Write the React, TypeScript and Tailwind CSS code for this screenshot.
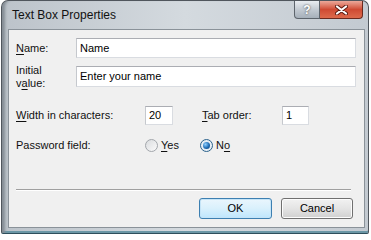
const font = "font-['Liberation_Sans','Noto_Sans',sans-serif]";

const Field = ({ value, className }: { value: string; className: string }) => (
  <div
    className={`flex items-center border border-[#abadb3] border-l-[#c5c8cd] border-b-[#d9dce1] border-r-[#d9dce1] bg-white pl-[3px] text-[11px] text-black ${className}`}
  >
    {value}
  </div>
);

const Radio = ({ checked }: { checked?: boolean }) => (
  <span
    className={`flex h-[13px] w-[13px] items-center justify-center rounded-full border ${
      checked ? "border-[#2c628b] bg-[#e6eef5]" : "border-[#a2a6ab] bg-gradient-to-br from-[#d9dbde] to-[#fbfbfb]"
    }`}
  >
    {checked && (
      <span className="h-[7px] w-[7px] rounded-full bg-[radial-gradient(circle_at_35%_35%,#8fd0ff,#1f6db5_55%,#0b3a6b)]" />
    )}
  </span>
);

export default function App() {
  return (
    <div className={`h-[237px] w-[371px] bg-white ${font}`}>
      <div className="ml-px flex h-[234px] w-[368px] flex-col rounded-t-[7px] rounded-b-[2px] border border-[#50565d] border-b-[#2e4f5c] bg-gradient-to-r from-[#bcc3ca] via-[#d4dadf] to-[#c3cad1] shadow-[inset_5px_0_3px_-2px_#858d95,inset_0_-2px_0_#6a97a6]">
        {/* Title bar */}
        <div className="flex h-[28px] justify-between">
          <span className="pl-[10px] pt-[6px] text-[12px] leading-[16px] text-[#111]">Text Box Properties</span>
          <div className="mr-[5px] flex h-[18px]">
            <div className="flex w-[26px] items-center justify-center rounded-bl-[4px] border border-t-0 border-[#5d646c] bg-gradient-to-b from-[#e9edf1] via-[#c3cad2] to-[#a6b0ba] text-[12px] font-bold leading-none text-white [text-shadow:0_0_2px_#333]">
              ?
            </div>
            <div className="flex w-[43px] items-center justify-center rounded-br-[4px] border border-l-0 border-t-0 border-[#6b2a1f] bg-gradient-to-b from-[#eba89a] via-[#cf4a33] to-[#dd6a4c]">
              <svg width="13" height="10" viewBox="0 0 13 10">
                <path d="M2 1.5 L11 8.5 M11 1.5 L2 8.5" stroke="#5a1a10" strokeWidth="4" strokeLinecap="round" />
                <path d="M2 1.5 L11 8.5 M11 1.5 L2 8.5" stroke="#fff" strokeWidth="2.2" strokeLinecap="round" />
              </svg>
            </div>
          </div>
        </div>

        {/* Client area */}
        <div className="mb-[5px] ml-[6px] mr-[3px] flex flex-1 flex-col border border-[#8a9299] bg-[#f0f0f0] pl-[7px] pr-[8px] pt-[8px] text-[11px] text-[#111]">
          <div className="flex h-[20px] items-center">
            <span className="w-[60px]">
              <u className="underline-offset-2">N</u>ame:
            </span>
            <Field value="Name" className="h-[20px] flex-1" />
          </div>

          <div className="mt-[8px] flex h-[21px] items-start">
            <span className="-mt-[2px] w-[60px] leading-[13px]">
              Initial
              <br />
              v<u className="underline-offset-2">a</u>lue:
            </span>
            <Field value="Enter your name" className="h-[21px] flex-1" />
          </div>

          <div className="mt-[19px] flex h-[19px] items-center">
            <span className="w-[129px]">
              <u className="underline-offset-2">W</u>idth in characters:
            </span>
            <Field value="20" className="h-[19px] w-[28px]" />
            <span className="ml-[29px] w-[80px]">
              <u className="underline-offset-2">T</u>ab order:
            </span>
            <Field value="1" className="h-[19px] w-[27px]" />
          </div>

          <div className="mt-[12px] flex h-[16px] items-center">
            <span className="w-[129px]">Password field:</span>
            <div className="flex w-[55px] items-center gap-[3px]">
              <Radio />
              <span>
                <u className="underline-offset-2">Y</u>es
              </span>
            </div>
            <div className="flex items-center gap-[3px]">
              <Radio checked />
              <span>
                N<u className="underline-offset-2">o</u>
              </span>
            </div>
          </div>

          <div className="mr-[5px] mt-[36px] h-[2px] border-t border-[#a0a0a0] border-b border-b-white" />

          <div className="mr-[3px] mt-[7px] flex justify-end gap-[9px]">
            <button className="h-[21px] w-[73px] rounded-[3px] border border-[#3c7fb1] bg-gradient-to-b from-[#eaf6fd] via-[#d9f0fc] to-[#bee6fd] text-[11px] text-black shadow-[inset_0_0_0_1px_#c5e4f7]">
              OK
            </button>
            <button className="h-[21px] w-[72px] rounded-[3px] border border-[#707070] bg-gradient-to-b from-[#f2f2f2] via-[#e4e4e4] to-[#d0d0d0] text-[11px] text-black shadow-[inset_0_0_0_1px_#fcfcfc]">
              Cancel
            </button>
          </div>
        </div>
      </div>
    </div>
  );
}
